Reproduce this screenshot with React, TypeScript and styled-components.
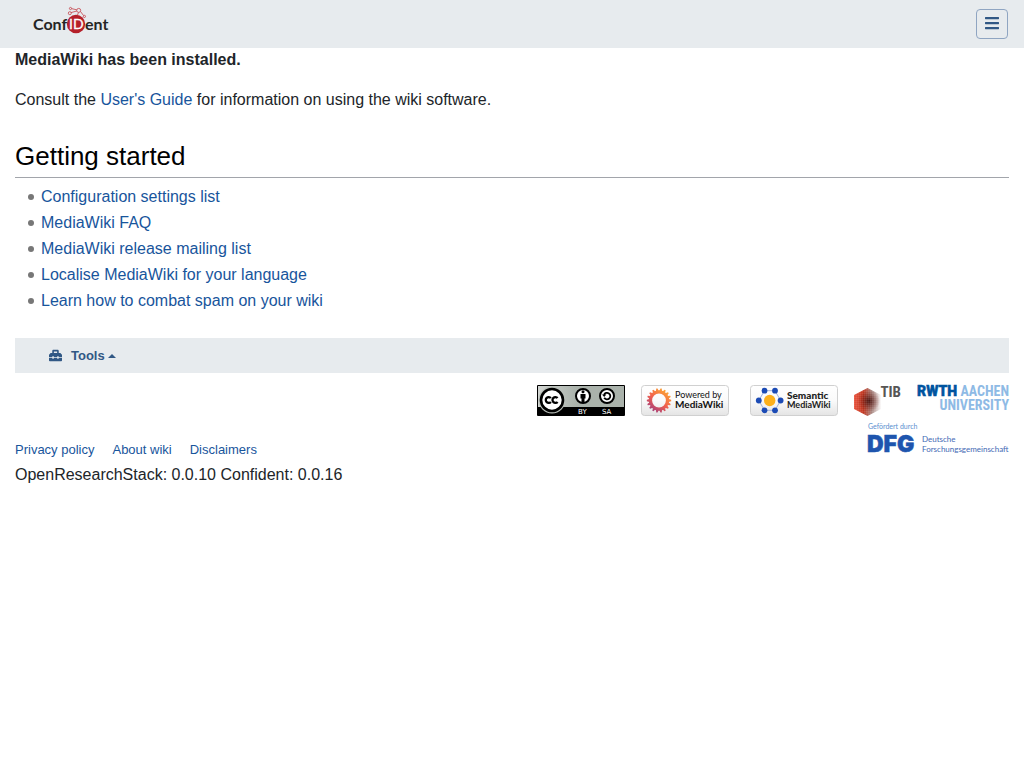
import React from "react";
import styled, { createGlobalStyle } from "styled-components";
import { FaBars, FaToolbox } from "react-icons/fa";

const GlobalStyle = createGlobalStyle`
  *, *::before, *::after { box-sizing: border-box; }
  body {
    margin: 0;
    background: #fff;
    color: #212529;
    font-family: "Liberation Sans", Arial, sans-serif;
    font-size: 16px;
    line-height: 24px;
  }
`;

const Navbar = styled.header`
  display: flex;
  align-items: center;
  justify-content: space-between;
  height: 48px;
  padding: 0 16px 0 32px;
  background: #e7ebee;
`;

const BrandLink = styled.a`
  display: flex;
  align-self: flex-start;
  padding-top: 4px;
`;

const MenuButton = styled.button`
  display: flex;
  align-items: center;
  justify-content: center;
  width: 32px;
  height: 30px;
  padding: 0 0 2px;
  border: 1px solid #8fa5c2;
  border-radius: 4px;
  background: transparent;
  color: #315885;
  font-size: 16px;
`;

const Page = styled.div`
  padding: 0 15px;
`;

const Paragraph = styled.p`
  margin: 0 0 16px;
`;

const Heading = styled.h2`
  margin: 26px 0 7px;
  padding-bottom: 2px;
  border-bottom: 1px solid #a2a5ab;
  color: #000;
  font-size: 26px;
  line-height: 37px;
  font-weight: 400;
`;

const TextLink = styled.a`
  color: #18559c;
  text-decoration: none;
`;

const LinkList = styled.ul`
  display: flex;
  flex-direction: column;
  gap: 2px;
  margin: 0;
  padding: 0;
  list-style: none;
`;

const LinkItem = styled.li`
  display: flex;
  align-items: center;
  gap: 7px;
  padding-left: 13px;

  &::before {
    content: "";
    width: 6px;
    height: 6px;
    border-radius: 50%;
    background: #777;
  }
`;

const ToolsBar = styled.nav`
  display: flex;
  height: 35px;
  margin-top: 25px;
  padding: 0 34px;
  background: #e7ebee;
`;

const ToolsButton = styled.button`
  display: flex;
  align-items: center;
  padding: 0;
  border: 0;
  background: none;
  color: #315885;
  font: bold 13px "Liberation Sans", Arial, sans-serif;
`;

const ToolsLabel = styled.span`
  margin: 0 3px 0 9px;
`;

const Caret = styled.span`
  border: 4px solid transparent;
  border-top: 0;
  border-bottom-color: currentColor;
`;

const Footer = styled.footer`
  padding-top: 12px;
`;

const FooterRow = styled.div`
  display: flex;
  align-items: flex-end;
  justify-content: space-between;
`;

const Places = styled.nav`
  display: flex;
  gap: 18px;
  font-size: 13px;
  line-height: 20px;
`;

const Badges = styled.div`
  display: flex;
  flex-wrap: wrap;
  justify-content: flex-end;
  gap: 7px 16px;
  max-width: 500px;
  padding-bottom: 6px;
`;

const BadgeLink = styled.a<{ $lead?: number }>`
  display: flex;
  margin-left: ${({ $lead = 0 }) => $lead}px;
`;

const Artwork = styled.svg`
  display: block;
  overflow: visible;
`;

const Version = styled.div`
  margin-top: 3px;
`;

function ConfidentLogo() {
  return (
    <Artwork width="78" height="32" viewBox="0 0 78 32" role="img" aria-label="ConfIDent">
      <circle cx="44" cy="20" r="9.2" fill="#b5202a" />
      <g fontFamily="Lato, sans-serif" fontSize="16" fontWeight="700" fill="#252525">
        <text x="1" y="26">Conf</text>
        <text x="53" y="26">ent</text>
      </g>
      <text x="37" y="25" fontFamily="Lato, sans-serif" fontSize="14" fill="#fff" stroke="#fff" strokeWidth="0.3">ID</text>
      <g fill="none" stroke="#c4424a" strokeWidth="0.8">
        <path d="M39.5 4.6 44.7 5.800M39 8.600 44.800 7M48.500 7.500 51.500 11.500M46.500 8.500 45.500 11" />
        <circle cx="38.500" cy="4.500" r="1.100" />
        <circle cx="37.800" cy="9.200" r="1.500" />
        <circle cx="46.700" cy="6.400" r="2" />
        <circle cx="52.400" cy="12.400" r="1.100" />
      </g>
    </Artwork>
  );
}

function CreativeCommonsBadge() {
  return (
    <Artwork width="88" height="31" viewBox="0 0 88 31" role="img" aria-label="Creative Commons BY-SA">
      <rect width="88" height="31" rx="1" fill="#000" />
      <defs>
        <linearGradient id="cc-plate">
          <stop offset="0" stopColor="#d2d5d2" />
          <stop offset="0.450" stopColor="#aab2ab" />
        </linearGradient>
      </defs>
      <rect x="1" y="1" width="86" height="21" fill="url(#cc-plate)" />
      <circle cx="15" cy="15" r="13.500" fill="#b8beb8" />
      <circle cx="15" cy="15" r="11" fill="#fff" stroke="#000" strokeWidth="2.600" />
      <g fill="none" stroke="#000" strokeWidth="2.300">
        <path d="M13.900 13.100A2.900 2.900 0 1 0 13.900 16.900" />
        <path d="M20.600 13.100A2.900 2.900 0 1 0 20.600 16.900" />
      </g>
      <circle cx="46" cy="11" r="7" fill="#fff" stroke="#000" strokeWidth="2" />
      <circle cx="46" cy="6.700" r="1.500" />
      <path d="M43.500 9h5v4.500h-1V17h-3v-3.500h-1z" />
      <circle cx="70" cy="11" r="7" fill="#fff" stroke="#000" strokeWidth="2" />
      <path d="M67 9.800a3.300 3.300 0 1 1 .2 3" fill="none" stroke="#000" strokeWidth="1.800" />
      <path d="M65 9.500h4.400L67.200 12z" />
      <g fill="#fff" fontFamily="DejaVu Sans, sans-serif" fontSize="7">
        <text x="41" y="29">BY</text>
        <text x="65" y="29">SA</text>
      </g>
    </Artwork>
  );
}

function BadgeFrame({ id }: { id: string }) {
  return (
    <>
      <defs>
        <linearGradient id={id} x2="0" y2="1">
          <stop offset="0" stopColor="#fff" />
          <stop offset="0.5" stopColor="#fafafa" />
          <stop offset="1" stopColor="#e4e4e4" />
        </linearGradient>
      </defs>
      <rect x="0.500" y="0.500" width="87" height="30" rx="3" fill={`url(#${id})`} stroke="#d0d0d0" />
    </>
  );
}

const petals = Array.from({ length: 18 }, (_, i) => i * 20);

function MediaWikiBadge() {
  return (
    <Artwork width="88" height="31" viewBox="0 0 88 31" role="img" aria-label="Powered by MediaWiki">
      <BadgeFrame id="mw-frame" />
      <defs>
        <linearGradient id="mw-flower" gradientUnits="userSpaceOnUse" x1="25" y1="5" x2="10" y2="27">
          <stop offset="0" stopColor="#fca532" />
          <stop offset="0.500" stopColor="#f1604e" />
          <stop offset="1" stopColor="#9b3b80" />
        </linearGradient>
      </defs>
      <circle cx="18" cy="15.500" r="8.600" fill="none" stroke="url(#mw-flower)" strokeWidth="3.400" />
      <path
        d={petals
          .map((deg) => {
            const at = (r: number, offset: number) => {
              const a = ((deg + offset) * Math.PI) / 180;
              return `${18 + r * Math.cos(a)} ${15.5 + r * Math.sin(a)}`;
            };
            return `M${at(9.5, -9)}L${at(12.2, -3)}L${at(12.2, 3)}L${at(9.5, 9)}Z`;
          })
          .join("")}
        fill="url(#mw-flower)"
      />
      <g fontFamily="Lato, sans-serif" fill="#111">
        <text x="34" y="13" fontSize="9">Powered by</text>
        <text x="34" y="23" fontSize="10" fontWeight="700">MediaWiki</text>
      </g>
    </Artwork>
  );
}

const hexNodes = [
  [14.5, 5.7],
  [25, 5.7],
  [30.6, 15.5],
  [25, 25.3],
  [14.5, 25.3],
  [8.8, 15.5],
];

function SemanticBadge() {
  return (
    <Artwork width="88" height="31" viewBox="0 0 88 31" role="img" aria-label="Powered by Semantic MediaWiki">
      <BadgeFrame id="smw-frame" />
      <polygon points={hexNodes.map((n) => n.join(",")).join(" ")} fill="none" stroke="#9fb1dc" />
      {hexNodes.map(([x, y]) => (
        <circle key={`${x}-${y}`} cx={x} cy={y} r="2.900" fill="#1c4bb5" />
      ))}
      <circle cx="19.700" cy="15.500" r="5.700" fill="#fdb01b" />
      <g fontFamily="Lato, sans-serif" fill="#222">
        <text x="37" y="14" fontSize="10" fontWeight="900">Semantic</text>
        <text x="37" y="23" fontSize="9" fontWeight="700">MediaWiki</text>
      </g>
    </Artwork>
  );
}

function TibLogo() {
  return (
    <Artwork width="47" height="31" viewBox="0 0 47 31" role="img" aria-label="TIB">
      <defs>
        <linearGradient id="tib-side">
          <stop offset="0" stopColor="#e8503a" />
          <stop offset="0.350" stopColor="#c0351f" />
          <stop offset="0.650" stopColor="#a88680" />
          <stop offset="1" stopColor="#fbfafa" />
        </linearGradient>
        <radialGradient id="tib-core">
          <stop offset="0" stopColor="#3a0805" stopOpacity="0.900" />
          <stop offset="1" stopColor="#6a1008" stopOpacity="0" />
        </radialGradient>
        <pattern id="tib-dots" width="2" height="2" patternUnits="userSpaceOnUse">
          <path d="M0 0h2M0 0v2" stroke="#fff" strokeOpacity="0.120" />
        </pattern>
      </defs>
      <path d="M13.500 3 27 10v14l-13.500 7L0 24V10z" fill="url(#tib-side)" />
      <circle cx="15" cy="16" r="11" fill="url(#tib-core)" />
      <path d="M13.500 3 27 10v14l-13.500 7L0 24V10z" fill="url(#tib-dots)" />
      <text x="47" y="12" textAnchor="end" fontFamily="Roboto Condensed, Roboto, sans-serif" fontSize="15" fontWeight="700" fill="#575655">TIB</text>
    </Artwork>
  );
}

function RwthLogo() {
  return (
    <Artwork width="92" height="26" viewBox="0 0 92 26" role="img" aria-label="RWTH Aachen University">
      <text x="0" y="11" fill="#00549f" stroke="#00549f" strokeWidth="0.5" fontFamily="Roboto, sans-serif" fontSize="14" fontWeight="900">RWTH</text>
      <g fontFamily="Roboto Condensed, Roboto, sans-serif" fontWeight="700" fill="#8ebae5" fontSize="14">
        <text x="92" y="11" textAnchor="end">AACHEN</text>
        <text x="92" y="25" textAnchor="end">UNIVERSITY</text>
      </g>
    </Artwork>
  );
}

function DfgLogo() {
  return (
    <Artwork width="141" height="31" viewBox="0 0 141 31" role="img" aria-label="Gefördert durch DFG, Deutsche Forschungsgemeinschaft">
      <g fontFamily="Lato, sans-serif">
        <text x="0" y="6" fontSize="7" fill="#5b90d0">Gefördert durch</text>
        <text x="54" y="19" fontSize="8" fill="#3f69b4">Deutsche</text>
        <text x="54" y="29" fontSize="8" fill="#3f69b4">Forschungsgemeinschaft</text>
      </g>
      <text x="-1" y="29" fontFamily="Inter, sans-serif" fontSize="23" fontWeight="900" fill="#1e55ae" stroke="#1e55ae" strokeWidth="0.5">DFG</text>
    </Artwork>
  );
}

const guides = [
  "Configuration settings list",
  "MediaWiki FAQ",
  "MediaWiki release mailing list",
  "Localise MediaWiki for your language",
  "Learn how to combat spam on your wiki",
];

const places = ["Privacy policy", "About wiki", "Disclaimers"];

export default function App() {
  return (
    <>
      <GlobalStyle />
      <Navbar>
        <BrandLink href="#">
          <ConfidentLogo />
        </BrandLink>
        <MenuButton type="button" aria-label="Toggle navigation">
          <FaBars />
        </MenuButton>
      </Navbar>
      <Page>
        <main>
          <Paragraph>
            <strong>MediaWiki has been installed.</strong>
          </Paragraph>
          <Paragraph>
            Consult the <TextLink href="#">User's Guide</TextLink> for information on using the wiki software.
          </Paragraph>
          <Heading>Getting started</Heading>
          <LinkList>
            {guides.map((guide) => (
              <LinkItem key={guide}>
                <TextLink href="#">{guide}</TextLink>
              </LinkItem>
            ))}
          </LinkList>
        </main>
        <ToolsBar aria-label="Tools">
          <ToolsButton type="button">
            <FaToolbox />
            <ToolsLabel>Tools</ToolsLabel>
            <Caret />
          </ToolsButton>
        </ToolsBar>
        <Footer>
          <FooterRow>
            <Places aria-label="Site">
              {places.map((place) => (
                <TextLink key={place} href="#">{place}</TextLink>
              ))}
            </Places>
            <Badges>
              <BadgeLink href="#"><CreativeCommonsBadge /></BadgeLink>
              <BadgeLink href="#"><MediaWikiBadge /></BadgeLink>
              <BadgeLink href="#" $lead={5}><SemanticBadge /></BadgeLink>
              <BadgeLink href="#"><TibLogo /></BadgeLink>
              <BadgeLink href="#"><RwthLogo /></BadgeLink>
              <BadgeLink href="#"><DfgLogo /></BadgeLink>
            </Badges>
          </FooterRow>
          <Version>OpenResearchStack: 0.0.10 Confident: 0.0.16</Version>
        </Footer>
      </Page>
    </>
  );
}
